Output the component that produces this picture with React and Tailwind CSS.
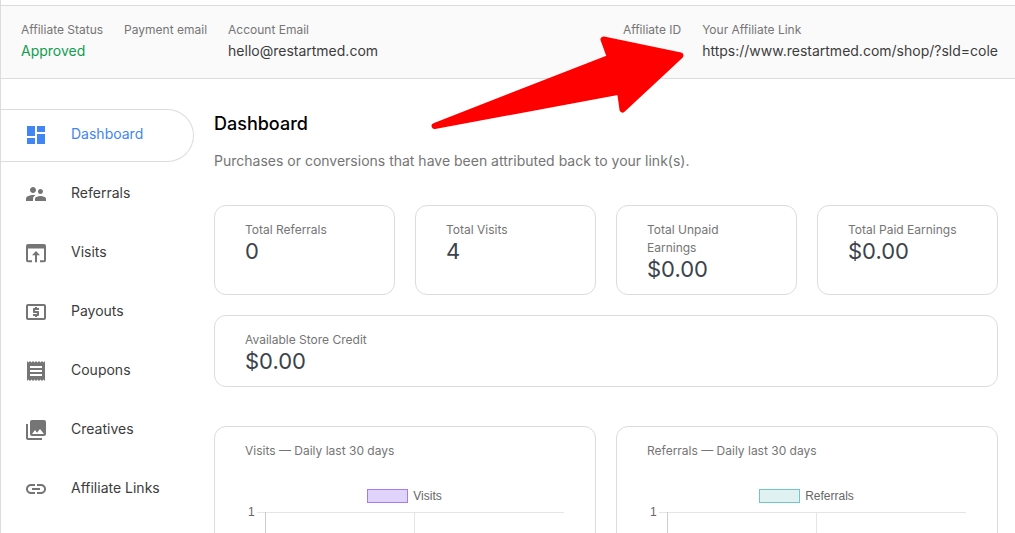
import React from "react";
import {
  MdDashboard,
  MdSupervisorAccount,
  MdLocalAtm,
  MdReceipt,
  MdPhotoLibrary,
  MdLink,
} from "react-icons/md";

function VisitsIcon({ size, className }) {
  return (
    <svg width={size} height={size} viewBox="0 0 24 24" fill="currentColor" className={className} aria-hidden="true">
      <path d="M4 3h16a2 2 0 0 1 2 2v14.200a2 2 0 0 1-2 2h-4v-2h4V7.500H4v11.700h4v2H4a2 2 0 0 1-2-2V5a2 2 0 0 1 2-2z" />
      <path d="M12 10l4 4.200h-3v7h-2v-7H8z" />
    </svg>
  );
}

const navItems = [
  { label: "Dashboard", Icon: MdDashboard, active: true },
  { label: "Referrals", Icon: MdSupervisorAccount },
  { label: "Visits", Icon: VisitsIcon },
  { label: "Payouts", Icon: MdLocalAtm },
  { label: "Coupons", Icon: MdReceipt },
  { label: "Creatives", Icon: MdPhotoLibrary },
  { label: "Affiliate Links", Icon: MdLink },
];

const stats = [
  { label: "Total Referrals", value: "0" },
  { label: "Total Visits", value: "4" },
  { label: "Total Unpaid Earnings", value: "$0.00" },
  { label: "Total Paid Earnings", value: "$0.00" },
];

function Field({ label, value, valueClass = "text-[#3c3c3c]" }) {
  return (
    <div>
      <dt className="text-xs leading-5 text-[#757575]">{label}</dt>
      <dd className={`text-sm leading-[22px] ${valueClass}`}>{value}</dd>
    </div>
  );
}

function NavItem({ label, Icon, active }) {
  return (
    <li>
      <a
        href="#"
        aria-current={active ? "page" : undefined}
        className={`flex h-[53px] items-center rounded-r-full border border-l-0 pb-px pl-[23px] text-sm ${
          active ? "border-[#dcdcdc] text-[#4285f4]" : "border-transparent text-[#3c3c3c]"
        }`}
      >
        <Icon size={24} className={active ? "text-[#4285f4]" : "text-[#757575]"} />
        <span className="pb-[2px] pl-[23px]">{label}</span>
      </a>
    </li>
  );
}

function StatCard({ label, value }) {
  return (
    <div className="rounded-xl border border-[#dcdcdc] px-[30px] pt-[15px] pb-[13px]">
      <div className="text-xs leading-[18px] text-[#757575]">{label}</div>
      <div className="text-[22px] leading-6 text-[#3c434a]">{value}</div>
    </div>
  );
}

function ChartCard({ title, legend, swatchClass }) {
  return (
    <section className="rounded-xl border border-[#dcdcdc] px-[30px] py-[15px]">
      <h2 className="text-xs leading-[18px] text-[#757575]">{title}</h2>
      <div className="mt-7 flex items-center justify-center gap-[5px] pr-px font-['Liberation_Sans',Arial,sans-serif] text-xs leading-4 text-[#666]">
        <span className={`h-[14px] w-[41px] border ${swatchClass}`} />
        {legend}
      </div>
      <div className="flex items-start pr-px font-['Liberation_Sans',Arial,sans-serif] text-xs leading-4 text-[#666]">
        <span className="w-3 pl-[3px]">1</span>
        <svg className="mt-2 h-[150px] min-w-0 flex-1" shapeRendering="crispEdges" aria-hidden="true">
          <rect x="0" y="0" width="100%" height="1" fill="#e5e5e5" />
          <rect x="8" y="0" width="1" height="100%" fill="#cccccc" />
          <rect x="51.1%" y="0" width="1" height="100%" fill="#e5e5e5" />
        </svg>
      </div>
    </section>
  );
}

export default function App() {
  return (
    <div className="relative h-screen overflow-hidden border-l border-[#dcdce0] bg-white pt-[5px] font-['Inter',sans-serif]">
      <header className="flex items-start justify-between border-y border-[#dcdcdc] bg-[#fafafa] pt-[14px] pr-[17px] pb-4 pl-5">
        <dl className="flex gap-[21px]">
          <Field label="Affiliate Status" value="Approved" valueClass="text-[#0f9d4f]" />
          <Field label="Payment email" />
          <Field label="Account Email" value="hello@restartmed.com" />
        </dl>
        <dl className="flex gap-[21px]">
          <Field label="Affiliate ID" />
          <Field label="Your Affiliate Link" value="https://www.restartmed.com/shop/?sld=cole" />
        </dl>
      </header>

      <div className="flex pt-[30px] pr-[17px]">
        <nav className="w-[193px] shrink-0" aria-label="Affiliate area">
          <ul className="flex flex-col gap-[6px]">
            {navItems.map((item) => (
              <NavItem key={item.label} {...item} />
            ))}
          </ul>
        </nav>

        <main className="ml-5 min-w-0 flex-1">
          <h1 className="text-lg leading-[30px] font-medium text-black">Dashboard</h1>
          <p className="mt-3 text-sm leading-5 text-[#757575]">
            Purchases or conversions that have been attributed back to your link(s).
          </p>
          <div className="mt-[34px] grid grid-cols-4 gap-5">
            {stats.map((s) => (
              <StatCard key={s.label} {...s} />
            ))}
          </div>
          <div className="mt-5">
            <StatCard label="Available Store Credit" value="$0.00" />
          </div>
          <div className="mt-[39px] grid grid-cols-2 gap-5">
            <ChartCard
              title="Visits — Daily last 30 days"
              legend="Visits"
              swatchClass="border-[#a57df0] bg-[#e0d4fd]"
            />
            <ChartCard
              title="Referrals — Daily last 30 days"
              legend="Referrals"
              swatchClass="border-[#6cc9c6] bg-[#dff1f1]"
            />
          </div>
        </main>
      </div>

      <svg
        className="pointer-events-none absolute top-[30px] right-[325px] h-[105px] w-[260px]"
        viewBox="430 30 260 105"
        aria-hidden="true"
      >
        <path
          d="M434.5 126L610 57.5L603.5 39.5L680.5 55.5L622.5 109.5L620 91.5Z"
          fill="#ff0000"
          stroke="#ff0000"
          strokeWidth="6"
          strokeLinejoin="round"
        />
      </svg>
    </div>
  );
}
